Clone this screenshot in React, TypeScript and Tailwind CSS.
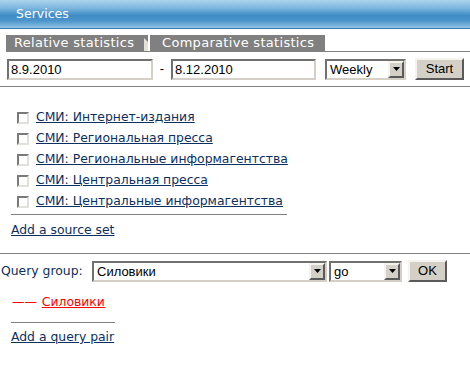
import React from 'react';

const sources = [
  'СМИ: Интернет-издания',
  'СМИ: Региональная пресса',
  'СМИ: Региональные информагентства',
  'СМИ: Центральная пресса',
  'СМИ: Центральные информагентства',
];

const inset =
  'border-2 border-t-[#707070] border-l-[#707070] border-b-[#d4d0c8] border-r-[#d4d0c8] bg-white';
const raised =
  'border-2 border-t-[#f4f3ee] border-l-[#f4f3ee] border-b-[#5a5a5a] border-r-[#5a5a5a] bg-[#d4d0c8]';

function Arrow() {
  return (
    <div className={`w-[16px] h-full ${raised} flex items-center justify-center`}>
      <svg width="7" height="4" viewBox="0 0 7 4">
        <polygon points="0,0 7,0 3.5,4" fill="#000" />
      </svg>
    </div>
  );
}

function Select({ value, width }: { value: string; width: string }) {
  return (
    <div className={`${inset} ${width} h-full flex items-stretch`}>
      <span className="flex-1 pl-[3px] leading-[17px] text-black">{value}</span>
      <Arrow />
    </div>
  );
}

function Button({ label, width }: { label: string; width: string }) {
  return (
    <div className={`${raised} ${width} h-full flex items-center justify-center text-black`}>
      {label}
    </div>
  );
}

export default function App() {
  return (
    <div className="w-[470px] h-[366px] bg-white overflow-hidden font-['DejaVu_Sans',sans-serif] text-[12.4px] text-[#0b2f5e]">
      {/* Header */}
      <div className="h-[29px] border-b border-[#3b7fb6] bg-[linear-gradient(to_bottom,#acd3ed_0%,#7ab5de_30%,#3f8bc5_55%,#4d96cc_75%,#93c3e4_100%)] pl-[16px] flex items-center text-white text-[12.5px]">
        Services
      </div>

      {/* Tabs */}
      <div className="mt-[6px] ml-[6px] flex gap-[2px] border-b border-[#808080] h-[17px] text-[13px]">
        <div className="relative w-[142px] h-[16px] bg-[#808080] text-white pl-[8px] leading-[16px] tracking-[0.3px]">
          Relative statistics
          <svg className="absolute right-0 top-0" width="8" height="16" viewBox="0 0 8 16">
            <polygon points="1,0 8,7 8,16 4,16 4,3" fill="#e4e1d6" />
          </svg>
        </div>
        <div className="w-[175px] h-[16px] bg-[#808080] text-white pl-[12px] leading-[16px] tracking-[0.3px]">
          Comparative statistics
        </div>
      </div>

      {/* Date row */}
      <div className="mt-[6px] h-[22px] flex items-center font-['Liberation_Sans',sans-serif] text-[13px] text-black">
        <div className={`${inset} ml-[7px] w-[146px] h-[21px] pl-[2px] leading-[17px]`}>8.9.2010</div>
        <span className="w-[18px] text-center">-</span>
        <div className={`${inset} w-[145px] h-[21px] pl-[2px] leading-[17px]`}>8.12.2010</div>
        <div className="ml-[9px] h-[21px]">
          <Select value="Weekly" width="w-[81px]" />
        </div>
        <div className="ml-[9px] h-[22px]">
          <Button label="Start" width="w-[49px]" />
        </div>
      </div>

      <div className="mt-[6px] h-px bg-[#808080]" />

      {/* Sources */}
      <div className="mt-[20px]">
        {sources.map((s) => (
          <div key={s} className="h-[21px] flex items-center pl-[17px]">
            <span className="w-[12px] h-[12px] border-2 border-t-[#7a7a7a] border-l-[#7a7a7a] border-b-[#e2e0da] border-r-[#e2e0da] bg-white" />
            <a href="#" className="ml-[7px] underline">{s}</a>
          </div>
        ))}
      </div>
      <div className="mt-[2px] ml-[11px] w-[276px] h-px bg-[#808080]" />
      <div className="mt-[7px] ml-[11px] h-[16px] leading-[16px]">
        <a href="#" className="underline">Add a source set</a>
      </div>

      <div className="mt-[15px] h-px bg-[#808080]" />

      {/* Query group */}
      <div className="mt-[6px] h-[22px] flex items-center">
        <span className="ml-[1px] w-[91px]">Query group:</span>
        <div className="h-[21px] font-['Liberation_Sans',sans-serif] text-[13px]">
          <Select value="Силовики" width="w-[235px]" />
        </div>
        <div className="ml-[2px] h-[21px] font-['Liberation_Sans',sans-serif] text-[13px]">
          <Select value="go" width="w-[73px]" />
        </div>
        <div className="ml-[6px] h-[22px] font-['Liberation_Sans',sans-serif] text-[13px]">
          <Button label="OK" width="w-[39px]" />
        </div>
      </div>

      <div className="mt-[12px] ml-[12px] h-[16px] leading-[16px] text-[#ff0000] flex items-center">
        <span>——</span>
        <a href="#" className="ml-[5px] underline">Силовики</a>
      </div>
      <div className="mt-[12px] ml-[11px] w-[104px] h-px bg-[#808080]" />
      <div className="mt-[6px] ml-[11px] h-[16px] leading-[16px]">
        <a href="#" className="underline">Add a query pair</a>
      </div>
    </div>
  );
}
